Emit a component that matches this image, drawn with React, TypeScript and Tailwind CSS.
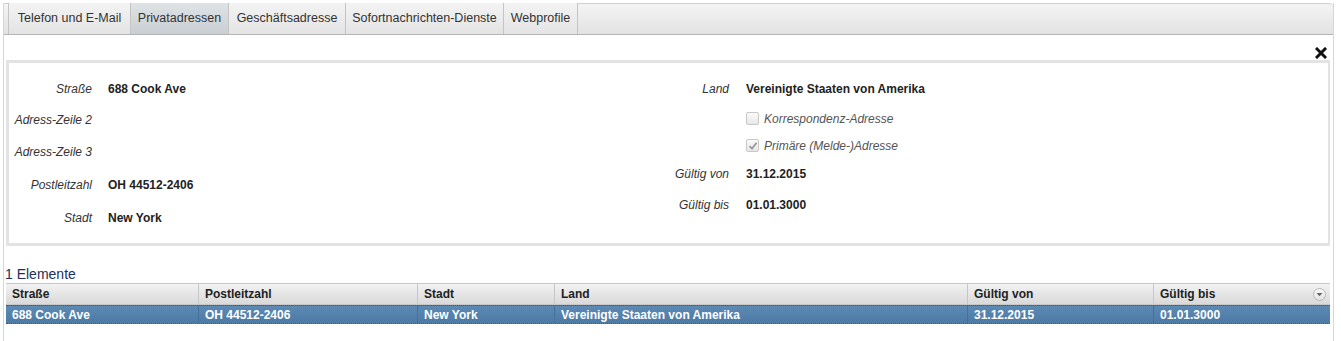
import React from "react";

const font = { fontFamily: '"Liberation Sans", Arial, sans-serif' };

function FormRow({ label, value, h = "h-[32px]" }: { label: string; value?: string; h?: string }) {
  return (
    <div className={`flex items-center ${h}`}>
      <div className="w-[83px] text-right italic text-[12px] text-[#333]">{label}</div>
      <div className="ml-[16px] font-bold text-[12px] text-[#222]">{value}</div>
    </div>
  );
}

function Check({ checked, label }: { checked?: boolean; label: string }) {
  return (
    <div className="flex items-center h-[27px] ml-[103px]">
      <div className="w-[13px] h-[13px] rounded-[2px] border border-[#c8c8c8] bg-gradient-to-b from-[#fafafa] to-[#e8e8e8] flex items-center justify-center">
        {checked && (
          <svg width="10" height="10" viewBox="0 0 10 10">
            <path d="M1.5 5.2 L4 7.6 L8.6 1.8" fill="none" stroke="#9a9a9a" strokeWidth="1.8" />
          </svg>
        )}
      </div>
      <div className="ml-[5px] italic text-[12px] text-[#555]">{label}</div>
    </div>
  );
}

const cols = [
  { name: "Straße", w: "w-[192px]", v: "688 Cook Ave" },
  { name: "Postleitzahl", w: "w-[219px]", v: "OH 44512-2406" },
  { name: "Stadt", w: "w-[137px]", v: "New York" },
  { name: "Land", w: "w-[413px]", v: "Vereinigte Staaten von Amerika" },
  { name: "Gültig von", w: "w-[186px]", v: "31.12.2015" },
  { name: "Gültig bis", w: "flex-1", v: "01.01.3000" },
];

const tabs = [
  { t: "Telefon und E-Mail", w: "w-[122px]" },
  { t: "Privatadressen", w: "w-[98px]" },
  { t: "Geschäftsadresse", w: "w-[117px]" },
  { t: "Sofortnachrichten-Dienste", w: "w-[158px]" },
  { t: "Webprofile", w: "w-[75px]" },
];

export default function App() {
  return (
    <div className="w-[1341px] h-[341px] bg-white overflow-hidden" style={font}>
      <div className="ml-[3px] mt-[3px] w-[1331px] h-[338px] border-l border-r border-[#d6d6d6] flex flex-col">
        {/* tab bar */}
        <div className="h-[32px] rounded-tr-[4px] border-t border-[#d0d0d0] border-b border-b-[#b5b5b5] bg-gradient-to-b from-[#f4f4f4] to-[#e2e2e2] flex items-end pl-[4px]">
          {tabs.map((tab, i) => (
            <div
              key={tab.t}
              className={`${tab.w} h-[31px] flex items-center justify-center whitespace-nowrap text-[12.5px] text-[#333] border-l border-[#c4c4c4] ${
                i === tabs.length - 1 ? "border-r" : ""
              } ${i === 1 ? "bg-gradient-to-b from-[#dfe3e6] to-[#c9ced3]" : "bg-gradient-to-b from-[#f3f3f3] to-[#e4e4e4]"}`}
            >
              {tab.t}
            </div>
          ))}
        </div>
        {/* close row */}
        <div className="h-[25px] flex items-end justify-end pr-[6px] pb-[1px]">
          <svg width="12" height="12" viewBox="0 0 12 12">
            <path d="M2 2 L10 10 M10 2 L2 10" stroke="#111" strokeWidth="3" strokeLinecap="square" />
          </svg>
        </div>
        {/* form panel */}
        <div className="ml-[2px] mr-[3px] h-[186px] border-[3px] border-[#e3e3e3] border-r-[2px] flex pt-[10px]">
          <div className="w-[634px] flex flex-col">
            <FormRow label="Straße" value="688 Cook Ave" h="h-[31px]" />
            <FormRow label="Adress-Zeile 2" />
            <FormRow label="Adress-Zeile 3" />
            <FormRow label="Postleitzahl" value="OH 44512-2406" h="h-[33px]" />
            <FormRow label="Stadt" value="New York" h="h-[33px]" />
          </div>
          <div className="flex flex-col">
            <div className="flex items-center h-[32px]">
              <div className="w-[86px] text-right italic text-[12px] text-[#333]">Land</div>
              <div className="ml-[17px] font-bold text-[12px] text-[#222]">Vereinigte Staaten von Amerika</div>
            </div>
            <Check label="Korrespondenz-Adresse" />
            <Check checked label="Primäre (Melde-)Adresse" />
            <div className="flex items-center h-[30px]">
              <div className="w-[86px] text-right italic text-[12px] text-[#333]">Gültig von</div>
              <div className="ml-[17px] font-bold text-[12px] text-[#222]">31.12.2015</div>
            </div>
            <div className="flex items-center h-[32px]">
              <div className="w-[86px] text-right italic text-[12px] text-[#333]">Gültig bis</div>
              <div className="ml-[17px] font-bold text-[12px] text-[#222]">01.01.3000</div>
            </div>
          </div>
        </div>
        {/* count */}
        <div className="h-[37px] flex items-end pl-[1px] text-[14px] text-[#1d2f5c] leading-[18px]">1 Elemente</div>
        {/* grid */}
        <div className="ml-[2px] mr-[3px] border-t border-[#c8c8c8]">
          <div className="h-[21px] flex bg-gradient-to-b from-[#f2f2f2] to-[#d9d9d9] border-b border-[#c8c8c8]">
            {cols.map((c, i) => (
              <div
                key={c.name}
                className={`${c.w} flex items-center pl-[6px] text-[12px] font-bold text-[#222] ${i > 0 ? "border-l border-[#c6c6c6]" : ""} ${
                  i === cols.length - 1 ? "justify-between pr-[4px]" : ""
                }`}
              >
                <span>{c.name}</span>
                {i === cols.length - 1 && (
                  <span className="w-[13px] h-[13px] rounded-full border border-[#b8b8b8] bg-gradient-to-b from-[#fafafa] to-[#e2e2e2] flex items-center justify-center">
                    <svg width="7" height="5" viewBox="0 0 7 5">
                      <path d="M0.5 1 L6.5 1 L3.5 4.2 Z" fill="#666" />
                    </svg>
                  </span>
                )}
              </div>
            ))}
          </div>
          <div className="h-[19px] flex bg-gradient-to-b from-[#5c8ab3] to-[#4c7aa5] border-t border-b border-dotted border-[#2e5f91]">
            {cols.map((c, i) => (
              <div
                key={c.name}
                className={`${c.w} flex items-center pl-[6px] text-[12px] font-bold text-white ${i > 0 ? "border-l border-[#44719b]" : ""}`}
              >
                {c.v}
              </div>
            ))}
          </div>
        </div>
      </div>
    </div>
  );
}
